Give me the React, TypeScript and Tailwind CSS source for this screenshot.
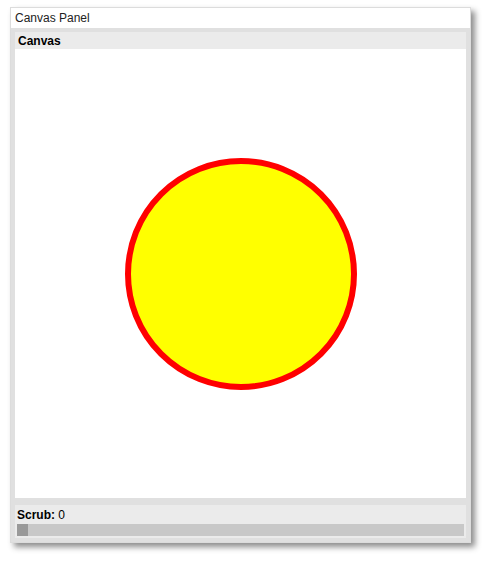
export default function App() {
  return (
    <div className="w-[484px] h-[563px] bg-white pl-[10px] pt-[7px]" style={{ fontFamily: '"Liberation Sans", Arial, sans-serif' }}>
      <div className="w-[461px] h-[536px] flex flex-col border border-[#dcdcdc] bg-[#e0e0e0] shadow-[4px_4px_6px_rgba(0,0,0,0.45)]">
        {/* title bar */}
        <div className="h-[20px] shrink-0 bg-white px-[4px] flex items-center text-[12px] text-[#222]">Canvas Panel</div>

        <div className="flex-1 flex flex-col p-[4px] pt-[4px] gap-[7px]">
          {/* canvas section */}
          <div className="flex flex-col">
            <div className="h-[17px] bg-[#ebebeb] px-[3px] flex items-center text-[12px] font-bold text-black">Canvas</div>
            <div className="h-[449px] bg-white flex items-center justify-center">
              <svg width="236" height="236" viewBox="0 0 236 236">
                <circle cx="118" cy="118" r="113" fill="#ffff00" stroke="#ff0000" strokeWidth="6" />
              </svg>
            </div>
          </div>

          {/* scrub */}
          <div className="flex-1 bg-[#ebebeb] px-[2px] pt-[3px] flex flex-col gap-[2px]">
            <div className="text-[12px] leading-[14px] text-black">
              <span className="font-bold">Scrub:</span> 0
            </div>
            <div className="h-[12px] bg-[#c8c8c8] flex">
              <div className="w-[11px] h-full bg-[#999999]" />
            </div>
          </div>
        </div>
      </div>
    </div>
  );
}
